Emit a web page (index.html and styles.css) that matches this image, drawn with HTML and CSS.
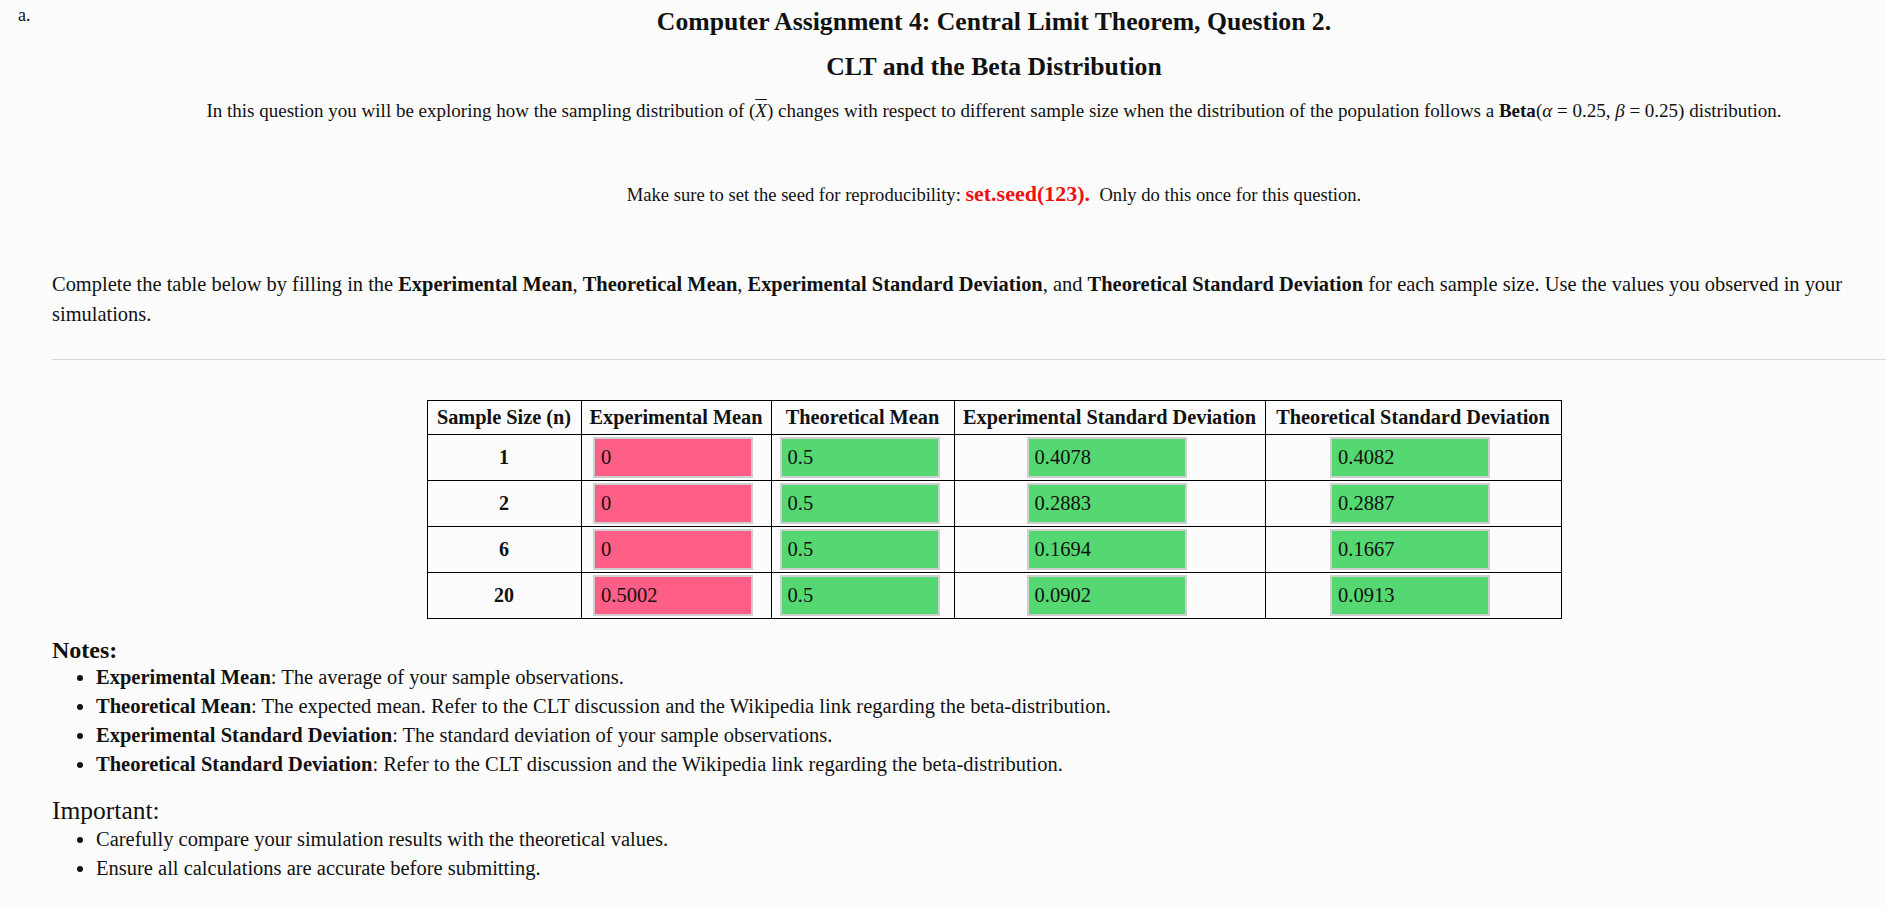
FILE: index.html
```html
<!DOCTYPE html>
<html lang="en">
<head>
<meta charset="utf-8">
<title>Computer Assignment 4: Central Limit Theorem, Question 2.</title>
<link rel="stylesheet" href="styles.css">
</head>
<body>
<div class="question">
  <div class="label">a.</div>
  <div class="content">
    <h1 class="title">Computer Assignment 4: Central Limit Theorem, Question 2.</h1>
    <h2 class="subtitle">CLT and the Beta Distribution</h2>
    <p class="intro">In this question you will be exploring how the sampling distribution of <span class="math">(<span class="xbar">X</span>)</span> changes with respect to different sample size when the distribution of the population follows a <strong>Beta</strong><span class="math">(<i>α</i> = 0.25, <i>β</i> = 0.25)</span> distribution.</p>
    <p class="seed">Make sure to set the seed for reproducibility: <span class="code">set.seed(123).</span> &nbsp;Only do this once for this question.</p>
    <p class="complete">Complete the table below by filling in the <strong>Experimental Mean</strong>, <strong>Theoretical Mean</strong>, <strong>Experimental Standard Deviation</strong>, and <strong>Theoretical Standard Deviation</strong> for each sample size. Use the values you observed in your simulations.</p>
    <hr class="rule">
    <table class="results">
      <colgroup>
        <col class="c1"><col class="c2"><col class="c3"><col class="c4"><col class="c5">
      </colgroup>
      <thead>
        <tr>
          <th>Sample Size (n)</th>
          <th>Experimental Mean</th>
          <th>Theoretical Mean</th>
          <th>Experimental Standard Deviation</th>
          <th>Theoretical Standard Deviation</th>
        </tr>
      </thead>
      <tbody>
        <tr>
          <td class="n">1</td>
          <td class="in"><input class="box wrong" value="0"></td>
          <td class="in"><input class="box right" value="0.5"></td>
          <td class="in"><input class="box right" value="0.4078"></td>
          <td class="in"><input class="box right" value="0.4082"></td>
        </tr>
        <tr>
          <td class="n">2</td>
          <td class="in"><input class="box wrong" value="0"></td>
          <td class="in"><input class="box right" value="0.5"></td>
          <td class="in"><input class="box right" value="0.2883"></td>
          <td class="in"><input class="box right" value="0.2887"></td>
        </tr>
        <tr>
          <td class="n">6</td>
          <td class="in"><input class="box wrong" value="0"></td>
          <td class="in"><input class="box right" value="0.5"></td>
          <td class="in"><input class="box right" value="0.1694"></td>
          <td class="in"><input class="box right" value="0.1667"></td>
        </tr>
        <tr>
          <td class="n">20</td>
          <td class="in"><input class="box wrong" value="0.5002"></td>
          <td class="in"><input class="box right" value="0.5"></td>
          <td class="in"><input class="box right" value="0.0902"></td>
          <td class="in"><input class="box right" value="0.0913"></td>
        </tr>
      </tbody>
    </table>
    <h3 class="notes-head">Notes:</h3>
    <ul class="notes">
      <li><strong>Experimental Mean</strong>: The average of your sample observations.</li>
      <li><strong>Theoretical Mean</strong>: The expected mean. Refer to the CLT discussion and the Wikipedia link regarding the beta-distribution.</li>
      <li><strong>Experimental Standard Deviation</strong>: The standard deviation of your sample observations.</li>
      <li><strong>Theoretical Standard Deviation</strong>: Refer to the CLT discussion and the Wikipedia link regarding the beta-distribution.</li>
    </ul>
    <h3 class="notes-head important">Important:</h3>
    <ul class="notes">
      <li>Carefully compare your simulation results with the theoretical values.</li>
      <li>Ensure all calculations are accurate before submitting.</li>
    </ul>
  </div>
</div>
</body>
</html>
```

FILE: styles.css
```css
html, body {
  margin: 0;
  padding: 0;
  background: #fcfcfc;
  overflow: hidden;
}
body {
  font-family: "Liberation Serif", "Times New Roman", serif;
  color: #111;
  width: 1886px;
  height: 910px;
}
.question {
  display: flex;
  align-items: flex-start;
}
.label {
  flex: none;
  width: 52px;
  box-sizing: border-box;
  padding-left: 18px;
  padding-top: 5px;
  font-size: 18px;
  line-height: 20px;
}
.content {
  flex: none;
  width: 1884px;
}
.title {
  margin: 6px 0 0;
  font-size: 25.7px;
  line-height: 32px;
  font-weight: bold;
  text-align: center;
}
.subtitle {
  margin: 13px 0 0;
  font-size: 25.7px;
  line-height: 32px;
  font-weight: bold;
  text-align: center;
}
.intro {
  margin: 14px 0 0;
  font-size: 19px;
  line-height: 28px;
  text-align: center;
}
.math {
  font-family: "Liberation Serif", serif;
}
.xbar {
  font-style: italic;
  text-decoration: overline;
}
.seed {
  margin: 54px 0 0;
  font-size: 18.6px;
  line-height: 30px;
  text-align: center;
}
.code {
  color: #ee1111;
  font-size: 22px;
  font-weight: bold;
}
.complete {
  margin: 59px 0 0;
  font-size: 20.45px;
  line-height: 30px;
  padding-right: 40px;
}
.rule {
  margin: 30px 0 0;
  border: 0;
  border-top: 1px solid #d6d6d6;
  height: 0;
}
.results {
  margin: 40px auto 0;
  border-collapse: collapse;
  width: 1134px;
  table-layout: fixed;
}
.c1 { width: 154px; }
.c2 { width: 190px; }
.c3 { width: 183px; }
.c4 { width: 311px; }
.c5 { width: 296px; }
.results th,
.results td {
  border: 1px solid #000;
  padding: 0;
  text-align: center;
  vertical-align: middle;
}
.results th {
  height: 33px;
  font-size: 20.3px;
  font-weight: bold;
  white-space: nowrap;
}
.results td {
  height: 45px;
}
.results td.in {
  padding-right: 6px;
}
.results td.n {
  font-size: 20px;
  font-weight: bold;
}
.box {
  display: block;
  margin: 0 auto;
  box-sizing: border-box;
  width: 160px;
  height: 41px;
  border: 2px solid #cfcfcf;
  padding: 0 0 0 6px;
  font-family: "Liberation Serif", serif;
  font-size: 20.5px;
  color: #111;
  outline: none;
}
.box.wrong { background: #ff5e87; }
.box.right { background: #55d872; }
.notes-head {
  margin: 18px 0 0;
  font-size: 24px;
  line-height: 26px;
  font-weight: bold;
}
.notes-head.important {
  font-weight: normal;
  font-size: 25.5px;
  line-height: 28px;
  margin-top: 18px;
}
.notes {
  margin: 0;
  padding-left: 44px;
  font-size: 20.5px;
  line-height: 29px;
}
```
